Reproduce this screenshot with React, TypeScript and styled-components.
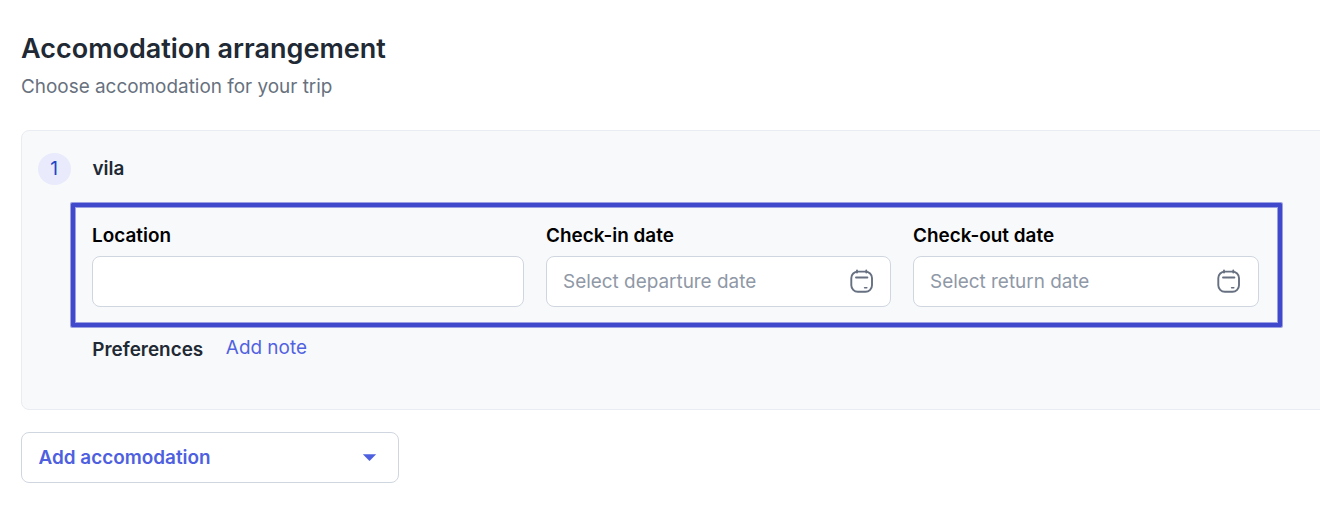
import React from "react";
import styled, { createGlobalStyle } from "styled-components";

const GlobalStyle = createGlobalStyle`
  * { box-sizing: border-box; }
  body { margin: 0; background: #fff; overflow: hidden; font-family: Inter, sans-serif; }
`;
const Page = styled.main`
  width: 1320px; height: 509px; padding: 32px 0 0 21px; overflow: hidden;
`;
const Title = styled.h1`
  margin: 0; font-size: 27px; line-height: 34px; font-weight: 600; color: #212934;
`;
const Subtitle = styled.p`
  margin: 8px 0 0; font-size: 18.92px; line-height: 26px; color: #67717e;
`;
const Card = styled.section`
  margin-top: 30px; width: 1320px; height: 280px; padding: 22px 0 0 16px;
  background: #f8f9fb; border: 1px solid #e9ecf1; border-radius: 8px;
`;
const CardHeader = styled.div`
  display: flex; align-items: center; gap: 21.5px; height: 32px;
`;
const Badge = styled.span`
  display: flex; align-items: center; justify-content: center;
  width: 33px; height: 32px; padding: 0 1px 1px 0; border-radius: 50%; background: #e9eafb;
  color: #1c46c4; font-size: 19px;
`;
const Name = styled.span`
  font-size: 18.92px; line-height: 24px; font-weight: 600; color: #212934;
`;
const CardName = styled(Name)`
  padding-bottom: 1px;
`;
const Highlight = styled.div`
  display: flex; gap: 22px; width: 1211px; height: 124px; margin: 18px 0 0 33px;
  padding: 16px 0 0 17px; border: 4px solid #4049cc; border-radius: 1px;
  box-shadow: 0 0 0 1px rgba(64, 73, 204, 0.5), inset 0 0 0 1px rgba(64, 73, 204, 0.5);
`;
const Field = styled.label<{ $width: number }>`
  display: flex; flex-direction: column; gap: 8px; width: ${(p) => p.$width}px;
  padding-top: 1px; flex-shrink: 0;
  font-size: 18.92px; line-height: 24px; font-weight: 600; color: #000;
`;
const Control = styled.div<{ $end?: number }>`
  display: flex; align-items: center; justify-content: space-between;
  height: 51px; padding: 0 ${(p) => p.$end ?? 16}px 0 16px; background: #fff;
  border: 1px solid #d0d6e0; border-radius: 8px;
  font-weight: 400; color: #8f98a6;
`;
const Footer = styled.div`
  display: flex; gap: 22.6px; margin: 9px 0 0 54.3px; line-height: 24px;
`;
const FooterLabel = styled(Name)`
  padding-top: 2px;
`;
const Link = styled.a`
  color: #5162e0; font-size: 18.92px;
`;
const AddButton = styled.button`
  display: flex; align-items: center; justify-content: space-between;
  width: 378px; height: 51px; margin-top: 22px; padding: 0 21px 0 16.5px;
  background: #fff; border: 1px solid #d0d6e0; border-radius: 8px;
  font: 600 18.92px/24px Inter, sans-serif; color: #4e60df;
`;

const CalendarIcon = () => (
  <svg width="26" height="27" viewBox="0 0 26 27" fill="none" stroke="#667080" strokeWidth="1.9" strokeLinecap="round">
    <rect x="2.3" y="3.6" width="20.7" height="20.2" rx="6.5" />
    <path d="M8 2.4v2.2M17.3 2.4v2.2M7 9.5h11.4" />
    <path d="M15.6 19.8h2.2" strokeWidth="1.6" />
  </svg>
);

export default function App() {
  return (
    <Page>
      <GlobalStyle />
      <Title>Accomodation arrangement</Title>
      <Subtitle>Choose accomodation for your trip</Subtitle>
      <Card>
        <CardHeader><Badge>1</Badge><CardName>vila</CardName></CardHeader>
        <Highlight>
          <Field $width={432}>Location<Control /></Field>
          <Field $width={345}>Check-in date<Control $end={15}>Select departure date<CalendarIcon /></Control></Field>
          <Field $width={346}>Check-out date<Control>Select return date<CalendarIcon /></Control></Field>
        </Highlight>
        <Footer><FooterLabel>Preferences</FooterLabel><Link>Add note</Link></Footer>
      </Card>
      <AddButton>
        Add accomodation
        <svg width="15" height="8" viewBox="0 0 15 8" fill="#4e60df"><path d="M.8 .3h13.4L7.5 7z" /></svg>
      </AddButton>
    </Page>
  );
}
